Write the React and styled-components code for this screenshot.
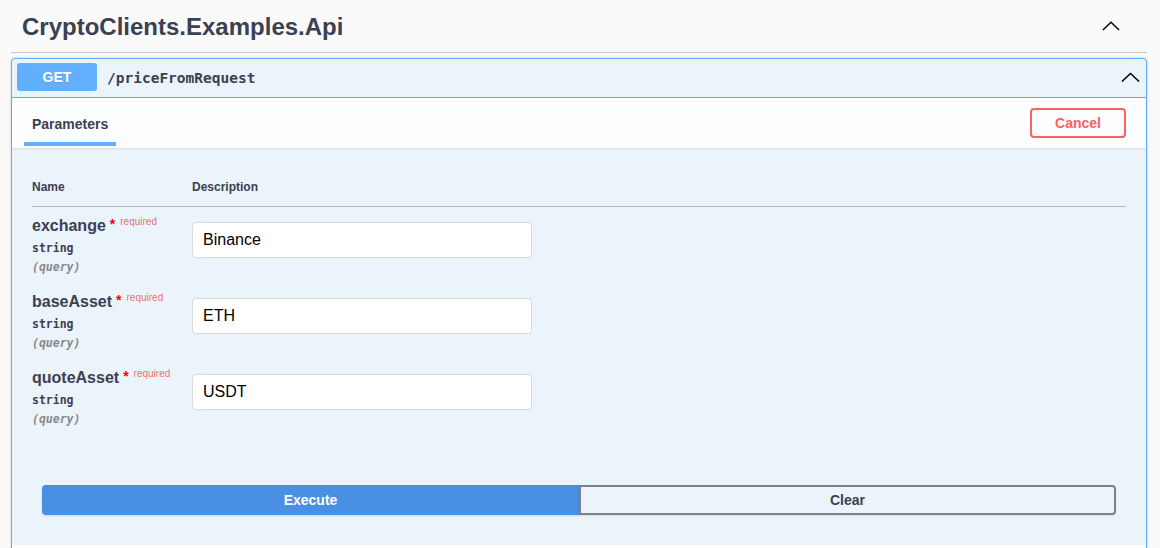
import React from 'react';
import styled, { createGlobalStyle } from 'styled-components';

const GlobalStyle = createGlobalStyle`
  body {
    margin: 0;
    background: #fafafa;
    font-family: "Liberation Sans", Arial, sans-serif;
    color: #3b4151;
    overflow: hidden;
  }
`;

const Wrapper = styled.div`
  padding: 0 13px 0 11px;
`;

const TagHeader = styled.div`
  display: flex;
  align-items: center;
  justify-content: space-between;
  height: 53px;
  padding: 0 27px 0 11px;
  border-bottom: 1px solid #c8c9cd;
  box-sizing: border-box;
  margin-bottom: 5px;
`;

const Title = styled.h3`
  margin: 0;
  font-size: 24px;
  font-weight: 700;
  color: #3b4151;
  padding-top: 2px;
`;

const Chevron = ({ size = 18 }) => (
  <svg width={size} height={size * 0.55} viewBox="0 0 20 11" fill="none">
    <polyline points="1,10 10,1.5 19,10" stroke="#000" strokeWidth="1.6" />
  </svg>
);

const Opblock = styled.div`
  border: 1px solid #61affe;
  border-radius: 4px;
  background: #ebf3fb;
  box-shadow: 0 0 3px rgba(0, 0, 0, 0.19);
`;

const Summary = styled.div`
  display: flex;
  align-items: center;
  padding: 4px 6px 6px 5px;
  border-bottom: 1px solid #61affe;
`;

const Method = styled.span`
  display: inline-flex;
  align-items: center;
  justify-content: center;
  width: 80px;
  height: 28px;
  border-radius: 3px;
  background: #61affe;
  color: #fff;
  font-size: 14px;
  font-weight: 700;
  text-shadow: 0 1px 0 rgba(0, 0, 0, 0.1);
`;

const Path = styled.span`
  flex: 1;
  padding: 1px 0 0 10px;
  font-family: "DejaVu Sans Mono", monospace;
  font-size: 14.5px;
  font-weight: 700;
  color: #3b4151;
`;

const SectionHeader = styled.div`
  display: flex;
  align-items: center;
  justify-content: space-between;
  height: 50px;
  padding: 0 20px 0 12px;
  background: rgba(255, 255, 255, 0.8);
  box-shadow: 0 1px 2px rgba(0, 0, 0, 0.1);
`;

const Tab = styled.div`
  align-self: stretch;
  display: flex;
  align-items: center;
  padding: 2px 8px 0;
  font-size: 14px;
  font-weight: 700;
  position: relative;
  &::after {
    content: '';
    position: absolute;
    left: 0;
    right: 0;
    bottom: 2px;
    height: 4px;
    background: #61affe;
  }
`;

const CancelButton = styled.button`
  width: 96px;
  height: 30px;
  border: 2px solid #ff6060;
  border-radius: 4px;
  background: transparent;
  color: #ff6060;
  font-family: "Liberation Sans", Arial, sans-serif;
  font-size: 14px;
  font-weight: 700;
`;

const Params = styled.div`
  padding: 30px 20px 0;
`;

const ParamGrid = styled.div`
  display: grid;
  grid-template-columns: 160px 1fr;
`;

const HeadCell = styled.div`
  font-size: 12px;
  font-weight: 700;
  padding: 2px 0 12px;
  border-bottom: 1px solid rgba(59, 65, 81, 0.3);
`;

const NameCell = styled.div`
  padding-top: 10px;
  height: 76px;
  box-sizing: border-box;
`;

const ParamName = styled.div`
  font-size: 16px;
  font-weight: 700;
  line-height: 18px;
`;

const Star = styled.span`
  color: red;
  font-size: 14px;
  margin-left: 4px;
  position: relative;
  top: -2px;
`;

const Required = styled.span`
  color: rgba(255, 0, 0, 0.6);
  font-size: 10px;
  font-weight: 400;
  margin-left: 5px;
  position: relative;
  top: -6px;
`;

const ParamType = styled.div`
  font-family: "DejaVu Sans Mono", monospace;
  font-size: 11.5px;
  font-weight: 600;
  margin-top: 2px;
  line-height: 18px;
`;

const ParamIn = styled(ParamType)`
  margin-top: 1px;
  color: #8a8a8a;
  font-style: italic;
`;

const InputCell = styled.div`
  padding-top: 15px;
`;

const Input = styled.input`
  width: 340px;
  height: 36px;
  box-sizing: border-box;
  padding: 0 10px;
  border: 1px solid #d9d9d9;
  border-radius: 4px;
  background: #fff;
  font-family: "Liberation Sans", Arial, sans-serif;
  font-size: 16px;
  color: #000;
`;

const ExecuteWrapper = styled.div`
  display: flex;
  padding: 50px 30px 30px;
`;

const ActionButton = styled.button`
  flex: 1;
  height: 30px;
  font-family: "Liberation Sans", Arial, sans-serif;
  font-size: 14px;
  font-weight: 700;
  box-shadow: 0 1px 2px rgba(0, 0, 0, 0.1);
  ${p =>
    p.primary
      ? `
    background: #4990e2;
    color: #fff;
    border: 2px solid #4990e2;
    border-radius: 4px 0 0 4px;
  `
      : `
    background: transparent;
    color: #3b4151;
    border: 2px solid #808080;
    border-radius: 0 4px 4px 0;
  `}
`;

const params = [
  { name: 'exchange', value: 'Binance' },
  { name: 'baseAsset', value: 'ETH' },
  { name: 'quoteAsset', value: 'USDT' },
];

const App = () => (
  <Wrapper>
    <GlobalStyle />
    <TagHeader>
      <Title>CryptoClients.Examples.Api</Title>
      <Chevron size={18} />
    </TagHeader>
    <Opblock>
      <Summary>
        <Method>GET</Method>
        <Path>/priceFromRequest</Path>
        <Chevron size={19} />
      </Summary>
      <SectionHeader>
        <Tab>Parameters</Tab>
        <CancelButton>Cancel</CancelButton>
      </SectionHeader>
      <Params>
        <ParamGrid>
          <HeadCell>Name</HeadCell>
          <HeadCell>Description</HeadCell>
          {params.map(p => (
            <React.Fragment key={p.name}>
              <NameCell>
                <ParamName>
                  {p.name}
                  <Star>*</Star>
                  <Required>required</Required>
                </ParamName>
                <ParamType>string</ParamType>
                <ParamIn>(query)</ParamIn>
              </NameCell>
              <InputCell>
                <Input defaultValue={p.value} />
              </InputCell>
            </React.Fragment>
          ))}
        </ParamGrid>
      </Params>
      <ExecuteWrapper>
        <ActionButton primary>Execute</ActionButton>
        <ActionButton>Clear</ActionButton>
      </ExecuteWrapper>
      <SectionHeader />
    </Opblock>
  </Wrapper>
);

export default App;
